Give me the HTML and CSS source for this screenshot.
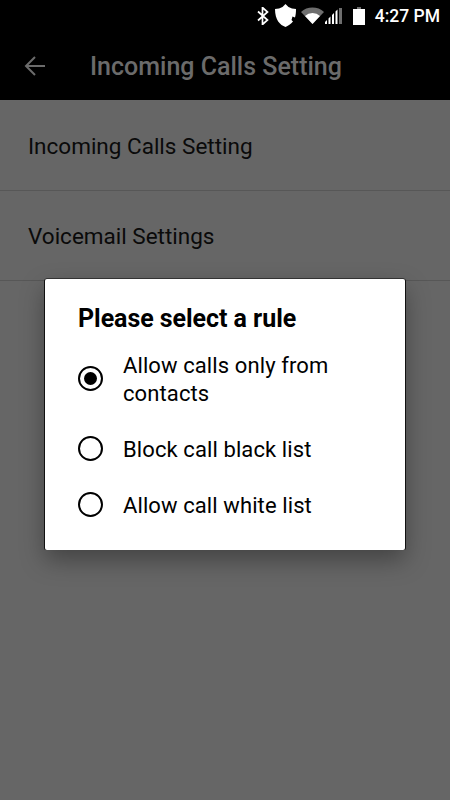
FILE: index.html
```html
<!DOCTYPE html>
<html>

<head>
    <title>Incoming Calls Setting</title>
    <link rel="stylesheet" href="styles.css">
</head>

<body>
    <div class="screen">
        <div class="statusbar">
            <svg class="st-bt" width="12" height="18" viewBox="0 0 12 18">
                <path d="M1 4.500l9.500 8.500-5 4.500V.5l5 4.500L1 13.500" fill="none" stroke="#fff" stroke-width="1.7"/>
            </svg>
            <svg class="st-shield" width="21" height="23" viewBox="0 0 21 23">
                <path d="M0 5l4-.5Q8 3.500 10.500 0 13 3.500 17 4.500l4 .5c0 3-.2 6-1 8.500l-2.500-1-1 3.500 1.500 1.500C16 20 13 22 10.500 23 5 21 0 16 0 5z" fill="#fff"/>
            </svg>
            <svg class="st-wifi" width="23" height="17" viewBox="0 0 23 17">
                <path d="M0 5a17 17 0 0 1 23 0l-11.500 12z" fill="#6e6e6e"/>
                <path d="M4 9a11 11 0 0 1 15 0l-7.500 8z" fill="#fff"/>
            </svg>
            <svg class="st-signal" width="18" height="16" viewBox="0 0 18 16">
                <path d="M0 16v-2l2-2v4zM3.500 16v-5.500l2-2V16zM7 16V7l2-2v11zM10.500 16V3.500l2-2V16z" fill="#fff"/>
                <path d="M14 16V0h3v16z" fill="#6e6e6e"/>
            </svg>
            <svg class="st-batt" width="12" height="18" viewBox="0 0 12 18">
                <path d="M4 0h4v2H4z" fill="#6e6e6e"/>
                <path d="M0 2h12v16H0z" fill="#fff"/>
            </svg>
            <span class="st-time">4:27 PM</span>
        </div>

        <div class="toolbar">
            <svg class="back" width="24" height="24" viewBox="0 0 24 24">
                <path d="M22 12H3M12 3l-9 9 9 9" fill="none" stroke="#6b6b6b" stroke-width="2"/>
            </svg>
            <span class="toolbar-title">Incoming Calls Setting</span>
        </div>

        <div class="rows">
            <div class="row">Incoming Calls Setting</div>
            <div class="row">Voicemail Settings</div>
        </div>

        <div class="dialog">
            <div class="dialog-title">Please select a rule</div>
            <label class="rule rule-first">
                <span class="radio checked"></span>
                <span class="rule-text">Allow calls only from contacts</span>
            </label>
            <label class="rule">
                <span class="radio"></span>
                <span class="rule-text">Block call black list</span>
            </label>
            <label class="rule">
                <span class="radio"></span>
                <span class="rule-text">Allow call white list</span>
            </label>
        </div>
    </div>
</body>

</html>
```

FILE: styles.css
```css
html, body {
  margin: 0;
  padding: 0;
}

body {
  font-family: Roboto, "Noto Sans", sans-serif;
  color: #000;
}

.screen {
  position: relative;
  width: 450px;
  height: 800px;
  overflow: hidden;
  background-color: #666;
}

/* Status bar */
.statusbar {
  display: flex;
  align-items: center;
  justify-content: flex-end;
  height: 31px;
  padding: 0 10px 1px 0;
  background-color: #000;
}

.st-bt { margin-right: 6px; }
.st-shield { margin-right: 5px; }
.st-wifi { margin-right: 1px; }
.st-signal { margin-right: 10px; }
.st-batt { margin-right: 10px; }

.st-time {
  color: #fff;
  font-size: 17.5px;
  font-weight: 500;
}

/* Toolbar */
.toolbar {
  display: flex;
  align-items: center;
  height: 68px;
  padding-left: 23px;
  background-color: #000;
}

.back { margin-right: 43px; }

.toolbar-title {
  color: #6b6b6b;
  font-size: 25px;
  font-weight: 500;
}

/* List rows */
.rows {
  padding-top: 1px;
}

.row {
  display: flex;
  align-items: center;
  height: 90px;
  padding-left: 28px;
  border-bottom: 1px solid #575757;
  box-sizing: border-box;
  font-size: 22.5px;
  color: #0a0a0a;
}

/* Dialog */
.dialog {
  position: absolute;
  left: 45px;
  top: 279px;
  width: 360px;
  height: 271px;
  padding: 26px 32px 0 33px;
  box-sizing: border-box;
  background-color: #fff;
  border-radius: 2px;
  box-shadow: 0 -1px 0 #333, 1px 0 0 #111, -1px 0 0 #111, 0 10px 24px rgba(0, 0, 0, .35);
}

.dialog-title {
  font-size: 25px;
  font-weight: 700;
  line-height: 28px;
  letter-spacing: -.05px;
  color: #000;
}

.rule {
  display: flex;
  align-items: center;
  margin-top: 28px;
  font-size: 22px;
  line-height: 28px;
  letter-spacing: .1px;
}

.rule-first {
  margin-top: 19px;
}

.radio {
  position: relative;
  flex: none;
  width: 25px;
  height: 25px;
  margin: 0 20px 3px -.5px;
  border: 2px solid #000;
  border-radius: 50%;
  box-sizing: border-box;
}

.rule-text {
  margin-left: .5px;
}

.radio.checked:before {
  position: absolute;
  content: "";
  left: 4px;
  top: 4px;
  width: 13px;
  height: 13px;
  border-radius: 50%;
  background-color: #000;
}
```
